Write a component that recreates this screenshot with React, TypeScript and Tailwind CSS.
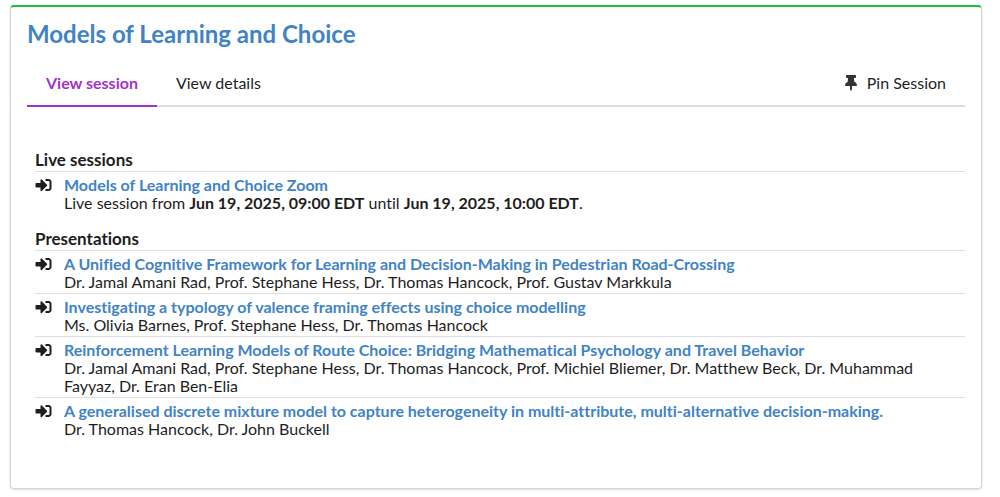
import { useState } from "react";
import { FaSignInAlt, FaThumbtack } from "react-icons/fa";

type Presentation = {
  id: number;
  title: string;
  authors: string;
};

const presentations: Presentation[] = [
  {
    id: 1,
    title: "A Unified Cognitive Framework for Learning and Decision-Making in Pedestrian Road-Crossing",
    authors: "Dr. Jamal Amani Rad, Prof. Stephane Hess, Dr. Thomas Hancock, Prof. Gustav Markkula",
  },
  {
    id: 2,
    title: "Investigating a typology of valence framing effects using choice modelling",
    authors: "Ms. Olivia Barnes, Prof. Stephane Hess, Dr. Thomas Hancock",
  },
  {
    id: 3,
    title: "Reinforcement Learning Models of Route Choice: Bridging Mathematical Psychology and Travel Behavior",
    authors:
      "Dr. Jamal Amani Rad, Prof. Stephane Hess, Dr. Thomas Hancock, Prof. Michiel Bliemer, Dr. Matthew Beck, Dr. Muhammad Fayyaz, Dr. Eran Ben-Elia",
  },
  {
    id: 4,
    title: "A generalised discrete mixture model to capture heterogeneity in multi-attribute, multi-alternative decision-making.",
    authors: "Dr. Thomas Hancock, Dr. John Buckell",
  },
];

function Item({ title, children }: { title: string; children: React.ReactNode }) {
  return (
    <li className="flex border-t border-[#dededf] pt-1 pb-[2px]">
      <FaSignInAlt className="mt-px h-4 w-[17px] shrink-0" />
      <div className="ml-3 pr-4">
        <a href="#" className="block font-bold text-[#4183c4]">
          {title}
        </a>
        <p>{children}</p>
      </div>
    </li>
  );
}

export default function App() {
  const [tab, setTab] = useState("session");

  const tabClass = (name: string) =>
    tab === name
      ? "-mb-[2px] border-b-2 border-[#a333c8] px-[19px] pt-[2px] font-bold text-[#a333c8]"
      : "-mb-[2px] border-b-2 border-transparent px-[19px] pt-[2px]";

  return (
    <main className="pt-[5px] pr-[18px] pb-2 pl-[10px] font-['Lato',sans-serif] text-[16px] leading-[18px] text-[#1e1e1e] [font-variant-ligatures:none]">
      <section className="rounded border border-t-2 border-[#d4d4d5] border-t-[#21ba45] px-4 pt-[11px] pb-12 shadow-sm">
        <h1 className="text-[24px] leading-8 font-bold text-[#4183c4]">
          Models of Learning and Choice
        </h1>

        <div className="mt-2 flex h-[49px] border-b-2 border-[#dededf]">
          <button onClick={() => setTab("session")} className={tabClass("session")}>
            View session
          </button>
          <button onClick={() => setTab("details")} className={tabClass("details")}>
            View details
          </button>
          <button className="ml-auto flex items-center gap-2 px-[19px] pt-[2px]">
            <FaThumbtack className="h-4 w-4 text-[#333333]" />
            Pin Session
          </button>
        </div>

        <div className="mt-11 pl-2">
          <h2 className="mb-[2px] text-[17px] font-bold">Live sessions</h2>
          <ul>
            <Item title="Models of Learning and Choice Zoom">
              Live session from <b>Jun 19, 2025, 09:00 EDT</b> until{" "}
              <b>Jun 19, 2025, 10:00 EDT</b>.
            </Item>
          </ul>

          <h2 className="mt-4 mb-[2px] text-[17px] font-bold">Presentations</h2>
          <ul>
            {presentations.map((p) => (
              <Item key={p.id} title={p.title}>
                {p.authors}
              </Item>
            ))}
          </ul>
        </div>
      </section>
    </main>
  );
}
